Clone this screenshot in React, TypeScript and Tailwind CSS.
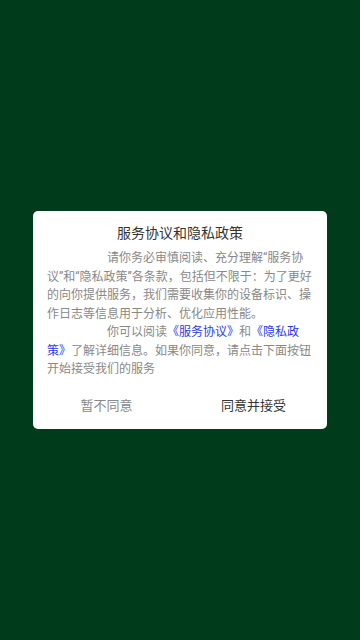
import React from 'react';

export default function App() {
  return (
    <div
      className="w-[360px] h-[640px] bg-[#003b1c] flex items-center justify-center"
      style={{ fontFamily: 'Roboto, "Noto Sans CJK SC", sans-serif' }}
    >
      <div className="w-[294px] bg-white rounded-[5px] flex flex-col">
        <div className="pt-3 text-center text-[14px] leading-5 text-[#333333]">服务协议和隐私政策</div>
        <div className="mt-[6px] px-[14px] text-[12px] leading-[18.5px] text-[#888888]">
          <p className="indent-[60px]">
            请你务必审慎阅读、充分理解“服务协议”和“隐私政策”各条款，包括但不限于：为了更好的向你提供服务，我们需要收集你的设备标识、操作日志等信息用于分析、优化应用性能。
          </p>
          <p className="indent-[60px]">
            你可以阅读<span className="text-[#2b3cf0]">《服务协议》</span>和<span className="text-[#2b3cf0]">《隐私政策》</span>了解详细信息。如果你同意，请点击下面按钮开始接受我们的服务
          </p>
        </div>
        <div className="flex mt-1">
          <button className="flex-1 h-[46px] text-[13px] text-[#888888]">暂不同意</button>
          <button className="flex-1 h-[46px] text-[13px] text-[#333333]">同意并接受</button>
        </div>
      </div>
    </div>
  );
}
